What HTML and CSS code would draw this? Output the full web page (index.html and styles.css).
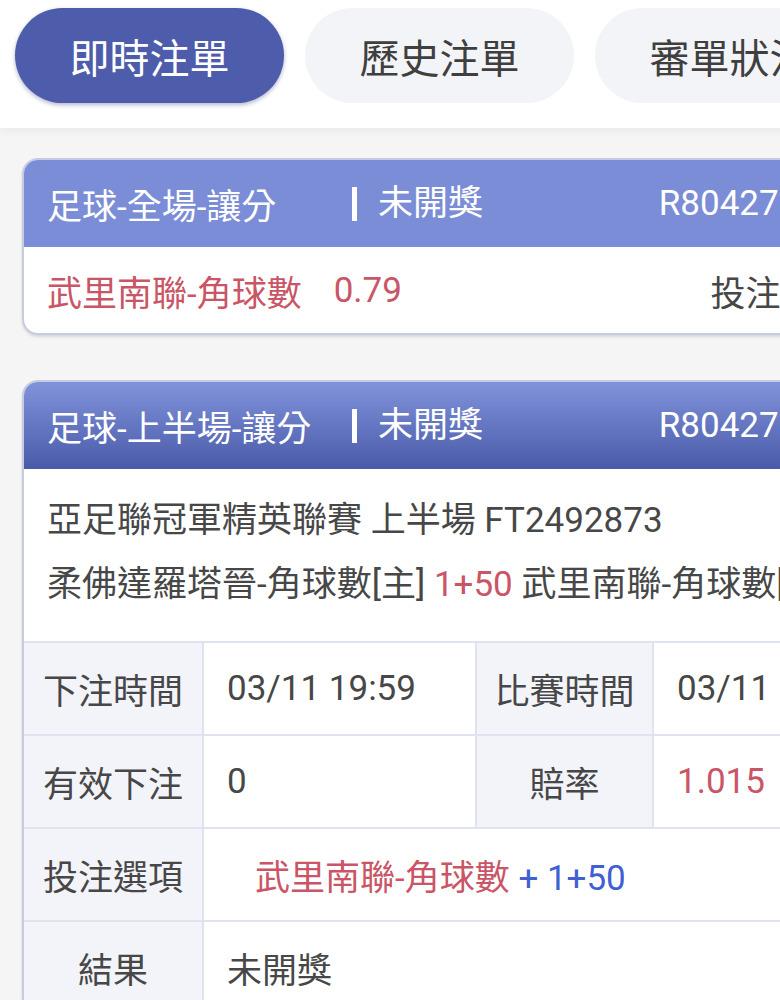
FILE: index.html
```html
<!DOCTYPE html>
<html lang="zh-Hant">
  <head>
    <meta charset="utf-8" />
    <meta name="viewport" content="width=device-width, initial-scale=1.0" />
    <title>即時注單</title>
    <link rel="stylesheet" href="styles.css">
  </head>
  <body>
    <div class="page">
      <nav class="tabs">
        <button class="tab active">即時注單</button>
        <button class="tab">歷史注單</button>
        <button class="tab">審單狀況</button>
      </nav>

      <main class="list">
        <!-- collapsed bet -->
        <section class="card">
          <div class="card-head">
            <span class="card-title">足球-全場-讓分</span>
            <span class="card-status">未開獎</span>
            <span class="card-id">R8042719305</span>
          </div>
          <div class="card-row">
            <span class="pick">武里南聯-角球數</span>
            <span class="pick odds">0.79</span>
            <span class="stake">投注 100.0</span>
          </div>
        </section>

        <!-- expanded bet -->
        <section class="card open">
          <div class="card-head">
            <span class="card-title">足球-上半場-讓分</span>
            <span class="card-status">未開獎</span>
            <span class="card-id">R8042719288</span>
          </div>
          <div class="match-info">
            <p>亞足聯冠軍精英聯賽 上半場 FT2492873</p>
            <p>柔佛達羅塔晉-角球數[主] <span class="red">1+50</span> 武里南聯-角球數[客]</p>
          </div>
          <div class="detail">
            <div class="label">下注時間</div>
            <div class="value">03/11 19:59</div>
            <div class="label">比賽時間</div>
            <div class="value">03/11 20:15</div>

            <div class="label">有效下注</div>
            <div class="value">0</div>
            <div class="label">賠率</div>
            <div class="value red">1.015</div>

            <div class="label">投注選項</div>
            <div class="value wide indent">
              <span><span class="red">武里南聯-角球數</span> <span class="blue">+ 1+50</span></span>
            </div>

            <div class="label">結果</div>
            <div class="value wide">未開獎</div>
          </div>
        </section>
      </main>
    </div>
  </body>
</html>
```

FILE: styles.css
```css
/* Global */
body {
  margin: 0;
  overflow: hidden;
  background: #f5f5f6;
  font-family: Roboto, "Noto Sans CJK TC", sans-serif;
  color: #474747;
}

.page {
  width: 924px;
}

/* Tabs */
.tabs {
  display: flex;
  gap: 21px;
  padding: 8px 15px 25px;
  background: #fff;
  box-shadow: 0 3px 10px rgba(0, 0, 0, 0.05);
}

.tab {
  flex: 0 0 269px;
  height: 95px;
  border: none;
  border-radius: 48px;
  background: #f3f4f8;
  color: #3f3f3f;
  font-family: inherit;
  font-size: 40px;
  padding: 0;
}

.tab.active {
  background: #4d5dab;
  color: #fff;
  box-shadow: 0 2px 4px rgba(40, 50, 110, 0.35);
}

/* Cards */
.list {
  display: flex;
  flex-direction: column;
  gap: 45px;
  padding: 30px 22px;
}

.card {
  background: #fff;
  border: 2px solid #c6cbe2;
  border-radius: 16px;
  overflow: hidden;
  box-shadow: 0 2px 3px rgba(0, 0, 0, 0.12);
  font-size: 35px;
}

.card-head {
  display: flex;
  align-items: center;
  height: 87px;
  padding: 0 23px;
  background: #7b8dd6;
  color: #fff;
}

.card.open .card-head {
  background: linear-gradient(180deg, #8093da, #4a5aa9);
}

.card-title {
  width: 305px;
}

.card-status {
  border-left: 5px solid #fff;
  padding-left: 21px;
  line-height: 34px;
}

.card-id {
  margin-left: auto;
}

.card-row {
  display: flex;
  align-items: center;
  height: 86px;
  padding: 0 23px;
}

.pick {
  color: #c95567;
}

.odds {
  margin-left: 32px;
}

.stake {
  margin-left: auto;
}

/* Expanded detail */
.match-info {
  padding: 20px 23px 24px;
}

.match-info p {
  margin: 0;
  line-height: 64px;
  white-space: nowrap;
}

.red {
  color: #c95567;
}

.blue {
  color: #3f5fd3;
}

.detail {
  display: grid;
  grid-template-columns: 178px 271px 175px 1fr;
  grid-auto-rows: 91px;
  gap: 2px;
  border-top: 2px solid #dfe2ef;
  background: #dfe2ef;
}

.detail .label,
.detail .value {
  display: flex;
  align-items: center;
}

.detail .label {
  justify-content: center;
  background: #f3f4fa;
}

.detail .value {
  padding-left: 23px;
  background: #fff;
}

.detail .wide {
  grid-column: span 3;
}

.detail .indent {
  padding-left: 51px;
}
```
